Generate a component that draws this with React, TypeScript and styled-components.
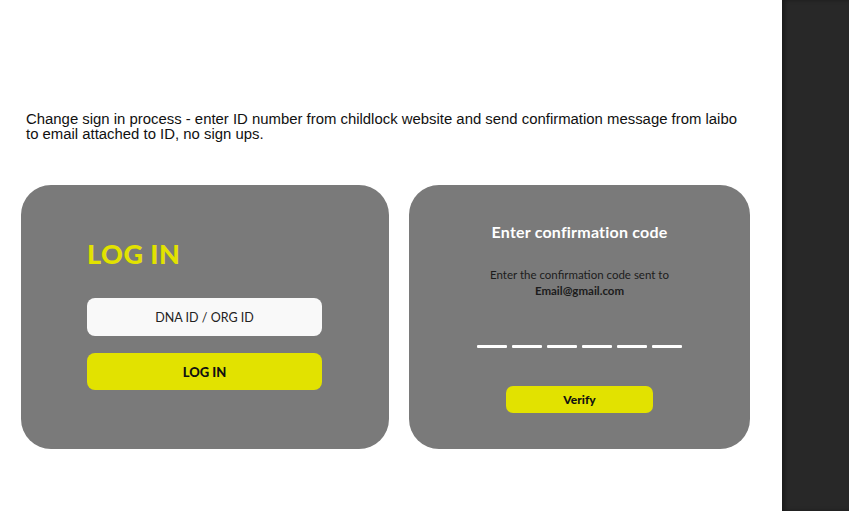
import React from 'react';
import styled, { createGlobalStyle } from 'styled-components';

const GlobalStyle = createGlobalStyle`
  html, body {
    margin: 0;
    padding: 0;
    background: #ffffff;
  }
  #root {
    height: 511px;
  }
`;

const Page = styled.div`
  display: flex;
  width: 849px;
  height: 511px;
  overflow: hidden;
`;

const Sheet = styled.main`
  flex: 0 0 782px;
  background: #ffffff;
  padding: 112px 0 0 21px;
  box-sizing: border-box;
`;

const SidePanel = styled.aside`
  flex: 1;
  background: #282828;
  box-shadow: inset 3px 0 4px rgba(0, 0, 0, 0.35);
`;

const Note = styled.p`
  margin: 0 0 0 5px;
  width: 725px;
  font-family: 'Liberation Sans', Arial, sans-serif;
  font-size: 14.9px;
  line-height: 15px;
  color: #111;
`;

const CardRow = styled.div`
  display: flex;
  gap: 20px;
  margin-top: 43px;
`;

const Card = styled.section<{ $width: number }>`
  width: ${p => p.$width}px;
  height: 264px;
  background: #7a7a7a;
  border-radius: 30px;
  box-sizing: border-box;
  font-family: Lato, 'Open Sans', sans-serif;
`;

const LoginCard = styled(Card)`
  padding: 53px 0 0 66px;
`;

const Heading = styled.h1`
  margin: 0 0 28px;
  font-size: 27px;
  line-height: 32px;
  font-weight: 900;
  color: #e2e200;
  letter-spacing: 0.5px;
`;

const Field = styled.div`
  width: 235px;
  height: 38px;
  border-radius: 8px;
  background: #f9f9f9;
  display: flex;
  align-items: center;
  justify-content: center;
  font-size: 12.5px;
  color: #222;
`;

const YellowButton = styled.button<{ $w: number; $h: number }>`
  display: flex;
  align-items: center;
  justify-content: center;
  width: ${p => p.$w}px;
  height: ${p => p.$h}px;
  border: none;
  border-radius: 8px;
  background: #e2e200;
  color: #111;
  font-family: Lato, 'Open Sans', sans-serif;
  font-weight: 900;
  font-size: 13px;
  padding: 0;
`;

const LoginButton = styled(YellowButton)`
  margin-top: 17px;
`;

const ConfirmCard = styled(Card)`
  display: flex;
  flex-direction: column;
  align-items: center;
  padding-top: 37px;
`;

const ConfirmTitle = styled.h2`
  margin: 0;
  font-size: 16px;
  line-height: 20px;
  font-weight: 700;
  color: #ffffff;
  letter-spacing: 0.2px;
`;

const Hint = styled.p`
  margin: 25px 0 0;
  font-size: 11.5px;
  line-height: 16px;
  color: #1c1c1c;
  text-align: center;
`;

const Email = styled.strong`
  display: block;
  font-weight: 700;
`;

const CodeRow = styled.div`
  display: flex;
  gap: 5px;
  margin-top: 46px;
`;

const Dash = styled.span`
  width: 30px;
  height: 3px;
  background: #ffffff;
  border-radius: 1px;
`;

const VerifyButton = styled(YellowButton)`
  margin-top: 38px;
  border-radius: 7px;
  font-size: 12px;
`;

export default function App() {
  return (
    <Page>
      <GlobalStyle />
      <Sheet>
        <Note>
          Change sign in process - enter ID number from childlock website and send confirmation message from laibo
          to email attached to ID, no sign ups.
        </Note>
        <CardRow>
          <LoginCard $width={368}>
            <Heading>LOG IN</Heading>
            <Field>DNA ID / ORG ID</Field>
            <LoginButton $w={235} $h={37}>LOG IN</LoginButton>
          </LoginCard>
          <ConfirmCard $width={341}>
            <ConfirmTitle>Enter confirmation code</ConfirmTitle>
            <Hint>
              Enter the confirmation code sent to
              <Email>Email@gmail.com</Email>
            </Hint>
            <CodeRow>
              {Array.from({ length: 6 }).map((_, i) => (
                <Dash key={i} />
              ))}
            </CodeRow>
            <VerifyButton $w={147} $h={27}>Verify</VerifyButton>
          </ConfirmCard>
        </CardRow>
      </Sheet>
      <SidePanel />
    </Page>
  );
}
